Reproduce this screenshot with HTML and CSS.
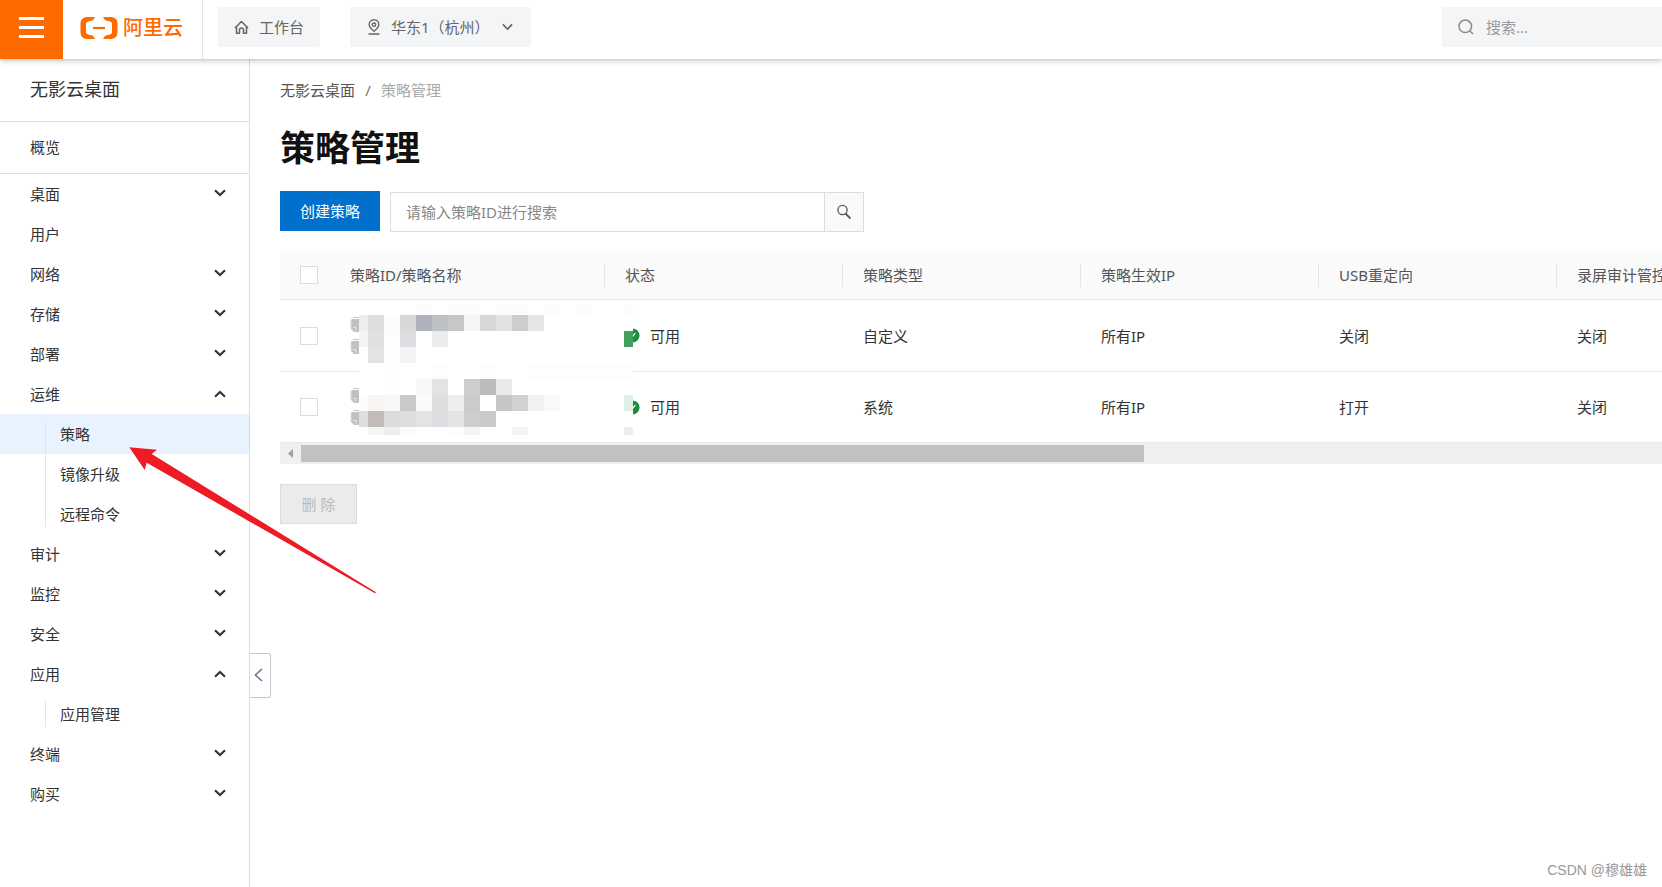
FILE: index.html
```html
<!DOCTYPE html>
<html lang="zh-CN">
<head>
<meta charset="utf-8">
<title>策略管理</title>
<link rel="stylesheet" href="styles.css">
</head>
<body>
<svg class="defs" aria-hidden="true">
  <symbol id="chevron" viewBox="0 0 12 8"><path d="M1 1.2 6 6 11 1.2" fill="none" stroke="currentColor" stroke-width="2.1"/></symbol>
  <symbol id="copy" viewBox="0 0 16 16"><path d="M3 .5h11" stroke="#c4c4c4" fill="none"/><path d="M2 2h12v13H4L1 12V3z" fill="#c1c1c1"/><path d="M1 11v-8l1-1" stroke="#dcdcdc" fill="none"/><path d="M3 10.5h3v3" stroke="#e4e4e4" fill="none"/></symbol>
  <symbol id="ok" viewBox="0 0 16 16"><circle cx="8" cy="8" r="7.5" fill="#1e8e3e"/><path d="M4.5 8.2 7 10.5l4-5" fill="none" stroke="#fff" stroke-width="1.3"/></symbol>
</svg>
<header class="topbar">
  <button class="menu" aria-label="菜单"><span></span><span></span><span></span></button>
  <a class="logo" href="#">
    <svg width="38" height="22" viewBox="0 0 38 22" fill="none" aria-hidden="true">
      <path d="M15 0H8C3 0 .5 2.500 .5 7v8c0 4.500 2.500 7 7.500 7h7l-2-3.200-5-1.300c-1.300-.4-2-1.200-2-2.500V7c0-1.300.7-2.100 2-2.500l5-1.300zM23 0h7c5 0 7.500 2.500 7.500 7v8c0 4.500-2.500 7-7.500 7h-7l2-3.200 5-1.300c1.300-.4 2-1.200 2-2.500V7c0-1.300-.7-2.100-2-2.500l-5-1.300z" fill="#ff6a00"/>
      <path d="M13 11h12" stroke="#ff6a00" stroke-width="2.200"/>
    </svg>
    <span>阿里云</span>
  </a>
  <button class="chip home">
    <svg width="15" height="16" viewBox="0 0 15 16" fill="none" stroke="currentColor" stroke-width="1.500" stroke-linejoin="round" aria-hidden="true"><path d="M1 9 7.500 2.500 14 9M2.500 8v6.200h3V11a2 2 0 0 1 4 0v3.200h3V8"/></svg>
    工作台
  </button>
  <button class="chip region">
    <svg width="14" height="16" viewBox="0 0 14 16" fill="none" stroke="currentColor" stroke-width="1.400" aria-hidden="true"><path d="M7 12.300C4 9.800 2.200 8 2.200 5.500a4.800 4.800 0 0 1 9.600 0C11.800 8 10 9.800 7 12.300zM1.500 15h11"/><circle cx="7" cy="5.700" r="1.700"/></svg>
    <span class="region-name">华东1（杭州）</span>
    <svg width="11" height="8" viewBox="0 0 12 8" aria-hidden="true"><path d="M1 1.200 6 6.200 11 1.200" fill="none" stroke="currentColor" stroke-width="1.800"/></svg>
  </button>
  <label class="global-search">
    <svg width="16" height="16" viewBox="0 0 16 16" fill="none" stroke="#8c8c8c" stroke-width="1.500" aria-hidden="true"><circle cx="7.300" cy="7.300" r="6.300"/><path d="m11.500 11.500 3.500 3.500"/></svg>
    <input type="text" placeholder="搜索..." aria-label="搜索">
  </label>
</header>
<div class="body">
  <nav class="sidebar">
    <div class="product">无影云桌面</div>
    <a class="overview" href="#">概览</a>
    <a class="item" href="#">桌面<svg class="chev"><use href="#chevron"/></svg></a>
    <a class="item" href="#">用户</a>
    <a class="item" href="#">网络<svg class="chev"><use href="#chevron"/></svg></a>
    <a class="item" href="#">存储<svg class="chev"><use href="#chevron"/></svg></a>
    <a class="item" href="#">部署<svg class="chev"><use href="#chevron"/></svg></a>
    <a class="item" href="#">运维<svg class="chev up"><use href="#chevron"/></svg></a>
    <div class="sub">
      <a class="item active" href="#">策略</a>
      <a class="item" href="#">镜像升级</a>
      <a class="item" href="#">远程命令</a>
    </div>
    <a class="item" href="#">审计<svg class="chev"><use href="#chevron"/></svg></a>
    <a class="item" href="#">监控<svg class="chev"><use href="#chevron"/></svg></a>
    <a class="item" href="#">安全<svg class="chev"><use href="#chevron"/></svg></a>
    <a class="item" href="#">应用<svg class="chev up"><use href="#chevron"/></svg></a>
    <div class="sub">
      <a class="item" href="#">应用管理</a>
    </div>
    <a class="item" href="#">终端<svg class="chev"><use href="#chevron"/></svg></a>
    <a class="item" href="#">购买<svg class="chev"><use href="#chevron"/></svg></a>
    <button class="collapse" aria-label="收起"><svg width="9" height="14" viewBox="0 0 9 14"><path d="M8 1 1.300 7 8 13" fill="none" stroke="#5f6f80" stroke-width="1.400"/></svg></button>
  </nav>
  <main class="content">
    <div class="crumbs"><a href="#">无影云桌面</a><span class="slash">/</span><span class="current">策略管理</span></div>
    <h1>策略管理</h1>
    <div class="toolbar">
      <button class="primary">创建策略</button>
      <div class="search">
        <input type="text" placeholder="请输入策略ID进行搜索" aria-label="策略ID">
        <button aria-label="搜索"><svg width="14" height="16" viewBox="0 0 14 16" fill="none" stroke="#555"><circle cx="5.500" cy="6" r="4.600" stroke-width="1.300"/><path d="m8.500 9.500 5 5" stroke-width="1.800"/></svg></button>
      </div>
    </div>
    <div class="table-wrap">
      <table>
        <colgroup><col class="c-check"><col class="c-name"><col><col><col><col><col></colgroup>
        <thead>
          <tr><th><input type="checkbox" aria-label="全选"></th><th>策略ID/策略名称</th><th>状态</th><th>策略类型</th><th>策略生效IP</th><th>USB重定向</th><th>录屏审计管控</th></tr>
        </thead>
        <tbody>
          <tr><td><input type="checkbox" aria-label="选择第一行"></td><td><div class="ids"><svg><use href="#copy"/></svg><svg><use href="#copy"/></svg></div></td><td><span class="status"><svg><use href="#ok"/></svg>可用</span></td><td>自定义</td><td>所有IP</td><td>关闭</td><td>关闭</td></tr>
          <tr><td><input type="checkbox" aria-label="选择第二行"></td><td><div class="ids"><svg><use href="#copy"/></svg><svg><use href="#copy"/></svg></div></td><td><span class="status"><svg><use href="#ok"/></svg>可用</span></td><td>系统</td><td>所有IP</td><td>打开</td><td>关闭</td></tr>
        </tbody>
      </table>
      <svg class="mosaic" width="274" height="130" viewBox="0 0 274 130" shape-rendering="crispEdges" aria-hidden="true">
        <path d="M0 0h274v130H0z" fill="#fff"/>
        <path d="M57 0h16v10H57zM89 0h32v10H89zM137 0h32v10h-32zM185 0h16v10h-16zM217 0h16v10h-16zM265 0h9v10h-9z" fill="#fcfcfc"/>
        <path d="M0 10h9v16H0z" fill="#ededed"/><path d="M9 10h16v16H9z" fill="#dededc"/><path d="M25 10h16v16H25z" fill="#fcfcfc"/><path d="M41 10h16v16H41z" fill="#d8d8d8"/><path d="M57 10h16v16H57z" fill="#adb2bb"/><path d="M73 10h16v16H73z" fill="#bcc1c4"/><path d="M89 10h16v16H89z" fill="#c5c8c6"/><path d="M105 10h16v16h-16z" fill="#f7f6f4"/><path d="M121 10h16v16h-16z" fill="#d8d8d8"/><path d="M137 10h16v16h-16z" fill="#e2e2e2"/><path d="M153 10h16v16h-16z" fill="#cfcccd"/><path d="M169 10h16v16h-16z" fill="#e5e5e5"/>
        <path d="M0 26h9v16H0z" fill="#f4f4f4"/><path d="M9 26h16v16H9z" fill="#dee1e0"/><path d="M25 26h16v32H25z" fill="#fdfefc"/><path d="M41 26h16v16H41z" fill="#dbdde0"/><path d="M73 26h16v16H73z" fill="#ececec"/><path d="M265 26h9v16h-9z" fill="#43a05c"/>
        <path d="M9 42h16v16H9z" fill="#e3e3e3"/><path d="M41 42h16v16H41z" fill="#f2f5f4"/>
        <path d="M25 58h16v32H25zM73 58h16v16H73zM121 58h16v16h-16zM169 58h105v16H169z" fill="#fdfdfd"/>
        <path d="M57 74h16v16H57z" fill="#f8f8f8"/><path d="M73 74h16v16H73z" fill="#e3e3e3"/><path d="M105 74h16v16h-16z" fill="#cecece"/><path d="M121 74h16v16h-16z" fill="#bcbcbe"/><path d="M137 74h16v16h-16z" fill="#e8ebea"/>
        <path d="M0 90h9v16H0z" fill="#fcfcfc"/><path d="M9 90h16v16H9z" fill="#f7f6f4"/><path d="M25 90h16v16H25z" fill="#f7f7f7"/><path d="M41 90h16v16H41z" fill="#cacbc9"/><path d="M57 90h16v16H57z" fill="#fafafa"/><path d="M73 90h16v16H73z" fill="#dededc"/><path d="M89 90h16v16H89z" fill="#efeeec"/><path d="M105 90h16v16h-16z" fill="#cacbcd"/><path d="M137 90h16v16h-16z" fill="#c6c7c5"/><path d="M153 90h16v16h-16z" fill="#d0d2d4"/><path d="M169 90h16v16h-16z" fill="#f3f2f1"/><path d="M185 90h16v16h-16z" fill="#f9f9f9"/><path d="M265 90h9v16h-9z" fill="#def0e4"/>
        <path d="M0 106h9v16H0z" fill="#dedede"/><path d="M9 106h16v16H9z" fill="#c3bbb9"/><path d="M25 106h16v16H25z" fill="#dcdcdd"/><path d="M41 106h16v16H41z" fill="#dededc"/><path d="M57 106h16v16H57z" fill="#e5e4e2"/><path d="M73 106h16v16H73z" fill="#dcdee1"/><path d="M89 106h16v16H89z" fill="#e5e4e2"/><path d="M105 106h16v16h-16z" fill="#cccdcf"/><path d="M121 106h16v16h-16z" fill="#cacaca"/>
        <path d="M9 122h16v8H9z" fill="#f5f5f5"/><path d="M25 122h16v8H25z" fill="#eee"/><path d="M41 122h16v8H41zM89 122h16v8H89z" fill="#fcfcfc"/><path d="M105 122h16v8h-16zM153 122h16v8h-16z" fill="#f4f4f4"/><path d="M265 122h9v8h-9z" fill="#eee"/>
      </svg>
    </div>
    <div class="hscroll"><svg width="21" height="17" viewBox="0 0 21 17" aria-hidden="true"><path d="m13 4-5 4.500 5 4.500z" fill="#a0a0a0"/></svg><div class="thumb"></div></div>
    <button class="delete" disabled>删 除</button>
  </main>
</div>
<svg class="pointer" width="250" height="150" viewBox="0 0 250 150" aria-hidden="true"><path d="m1.300 1.300 27.700 2.400-5.300 4.300L248 146.300l-1 1L18.700 16.700l-2 7.300z" fill="#ed1c24"/></svg>
<div class="watermark">CSDN @穆雄雄</div>
</body>
</html>
```
FILE: styles.css
```css
* { box-sizing: border-box; }
body {
  margin: 0;
  min-height: 100vh;
  display: flex;
  flex-direction: column;
  position: relative;
  overflow-x: hidden;
  background: #fff;
  color: #333;
  font: 15px/20px "Noto Sans", "Noto Sans CJK SC", sans-serif;
}
a { color: inherit; text-decoration: none; }
button, input { font: inherit; color: inherit; }
button { border: 0; padding: 0; background: none; }
svg { flex: none; display: block; }
.defs { display: none; }

.topbar {
  height: 59px;
  display: flex;
  align-items: center;
  position: relative;
  z-index: 2;
  background: #fff;
  box-shadow: 0 1px 6px rgba(0, 0, 0, .3);
}
.menu {
  align-self: stretch;
  width: 63px;
  display: flex;
  flex-direction: column;
  align-items: center;
  justify-content: center;
  gap: 6px;
  padding-bottom: 4px;
  background: #ff6a00;
}
.menu span { width: 25px; height: 3px; background: #fff; }
.logo {
  align-self: stretch;
  width: 140px;
  display: flex;
  align-items: center;
  gap: 5px;
  padding: 0 0 3px 17px;
  border-right: 1px solid #e3e4e6;
  color: #ff6a00;
  font-size: 20px;
  font-weight: 500;
  white-space: nowrap;
}
.chip {
  height: 40px;
  display: flex;
  align-items: center;
  margin: 0 0 5px 15px;
  padding: 0 16px;
  border-radius: 2px;
  background: #f4f5f7;
  color: #666;
}
.home { gap: 10px; }
.region { margin-left: 30px; padding: 0 18px 0 17px; gap: 10px; }
.region-name { width: 101px; text-align: left; white-space: nowrap; }
.global-search {
  width: 220px;
  height: 40px;
  display: flex;
  align-items: center;
  gap: 12px;
  margin: 0 0 5px auto;
  padding-left: 16px;
  background: #f4f5f7;
}
.global-search input { width: 100%; padding: 0; border: 0; background: none; outline: 0; }
.global-search input::placeholder { color: #999; }

.body { flex: 1; display: flex; }
.sidebar {
  flex: none;
  width: 250px;
  position: relative;
  border-right: 1px solid #dcdcdc;
}
.product {
  height: 63px;
  padding: 20px 30px;
  border-bottom: 1px solid #dcdcdc;
  font-size: 18px;
}
.overview {
  height: 52px;
  display: flex;
  align-items: center;
  padding: 0 30px 2px;
  border-bottom: 1px solid #dcdcdc;
}
.item {
  height: 40px;
  display: flex;
  align-items: center;
  justify-content: space-between;
  padding: 0 23px 0 30px;
}
.chev { width: 12px; height: 8px; margin-bottom: 2px; }
.chev.up { margin-bottom: 0; transform: rotate(180deg); }
.sub { position: relative; }
.sub::before {
  content: "";
  position: absolute;
  left: 45px;
  top: 7px;
  bottom: 7px;
  border-left: 1px solid #e3e4e6;
}
.sub .item { padding-left: 60px; }
.active { background: #e8f3ff; }
.collapse {
  position: absolute;
  left: 249px;
  top: 594px;
  width: 22px;
  height: 45px;
  display: flex;
  align-items: center;
  justify-content: center;
  padding: 0 4px 2px 0;
  border: 1px solid #c0c6cc;
  border-left-color: #dcdcdc;
  border-radius: 0 3px 3px 0;
  background: #fff;
}

.content { flex: 1; min-width: 0; padding: 21px 0 0 30px; }
.crumbs { display: flex; color: #555; }
.slash { width: 26px; text-align: center; color: #777; }
.current { color: #aaa; }
h1 { margin: 24px 0 19px; color: #111; font-size: 35px; line-height: 48px; font-weight: 700; }
.toolbar { display: flex; gap: 10px; margin-bottom: 19px; }
.primary { width: 100px; height: 40px; background: #0070cc; color: #fff; }
.search { display: flex; width: 474px; height: 40px; margin-top: 1px; border: 1px solid #dcdcdc; }
.search input { flex: 1; min-width: 0; padding: 0 15px; border: 0; outline: 0; }
.search input::placeholder { color: #888; }
.search button {
  width: 39px;
  display: flex;
  align-items: center;
  justify-content: center;
  border-left: 1px solid #dcdcdc;
  background: #fafafa;
}

.table-wrap { position: relative; overflow: hidden; }
table { width: 1515px; table-layout: fixed; border-collapse: separate; border-spacing: 0; }
.c-check { width: 50px; }
.c-name { width: 275px; }
th, td { padding: 0 20px; text-align: left; border-bottom: 1px solid #e8e8e8; font-weight: 400; }
th { height: 49px; background: #fafafa; color: #555; position: relative; white-space: nowrap; }
th:nth-child(n+3)::before {
  content: "";
  position: absolute;
  left: -1px;
  top: 12px;
  bottom: 12px;
  border-left: 1px solid #e3e4e6;
}
td { height: 71px; }
tbody tr:first-child td { height: 72px; }
th:first-child, td:first-child { padding-right: 0; }
input[type="checkbox"] {
  appearance: none;
  display: block;
  width: 18px;
  height: 18px;
  margin: 0;
  border: 1px solid #dcdcdc;
  background: #fff;
}
.ids { display: flex; flex-direction: column; gap: 6px; }
.ids svg { width: 16px; height: 16px; }
.status { display: flex; align-items: center; gap: 10px; }
.status svg { width: 15px; height: 15px; }
.mosaic { position: absolute; left: 79px; top: 54px; }
.hscroll { display: flex; align-items: center; height: 21px; background: #f0f0f0; }
.thumb { width: 61%; height: 17px; background: #c1c1c1; }
.delete {
  width: 77px;
  height: 40px;
  margin-top: 20px;
  border: 1px solid #dcdcdc;
  background: #ebebeb;
  color: #bbb;
}

.pointer { position: absolute; left: 128px; top: 446px; z-index: 3; }
.watermark {
  position: absolute;
  right: 15px;
  bottom: 7px;
  color: #999;
  font-family: "Liberation Sans", "Noto Sans CJK SC", sans-serif;
  font-size: 14px;
}
```
